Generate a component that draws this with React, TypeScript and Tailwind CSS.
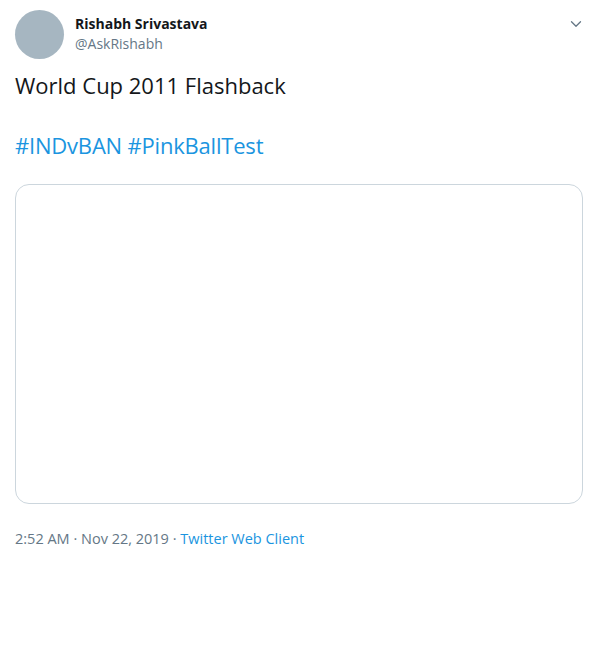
import { ChevronDown } from "lucide-react";

export default function App() {
  return (
    <div className="w-[598px] h-[662px] bg-white font-['Open_Sans',sans-serif]">
      <div className="px-[15px] pt-[10px]">
        {/* Header */}
        <div className="flex items-start">
          <div className="w-[49px] h-[49px] rounded-full bg-[#a6b6c1] shrink-0" />
          <div className="ml-[11px] flex flex-col pt-[4px]">
            <span className="text-[14px] font-bold text-[#14171a] leading-[20px]">Rishabh Srivastava</span>
            <span className="text-[14px] text-[#657786] leading-[20px]">@AskRishabh</span>
          </div>
          <div className="ml-auto pt-[5px] mr-[-2px]">
            <ChevronDown size={18} className="text-[#657786]" strokeWidth={1.75} />
          </div>
        </div>

        {/* Body */}
        <div className="mt-[11px] text-[22px] leading-[30px] text-[#14171a]">
          <p>World Cup 2011 Flashback</p>
          <p className="mt-[30px] text-[#1b95e0] tracking-[-0.2px]">#INDvBAN #PinkBallTest</p>
        </div>

        {/* Media card */}
        <div className="mt-[24px] h-[320px] rounded-[14px] border border-[#ccd6dd]" />

        {/* Meta */}
        <div className="mt-[25px] text-[14.5px] leading-[20px] text-[#657786]">
          2:52 AM · Nov 22, 2019 · <span className="text-[#1b95e0]">Twitter Web Client</span>
        </div>
      </div>
    </div>
  );
}
